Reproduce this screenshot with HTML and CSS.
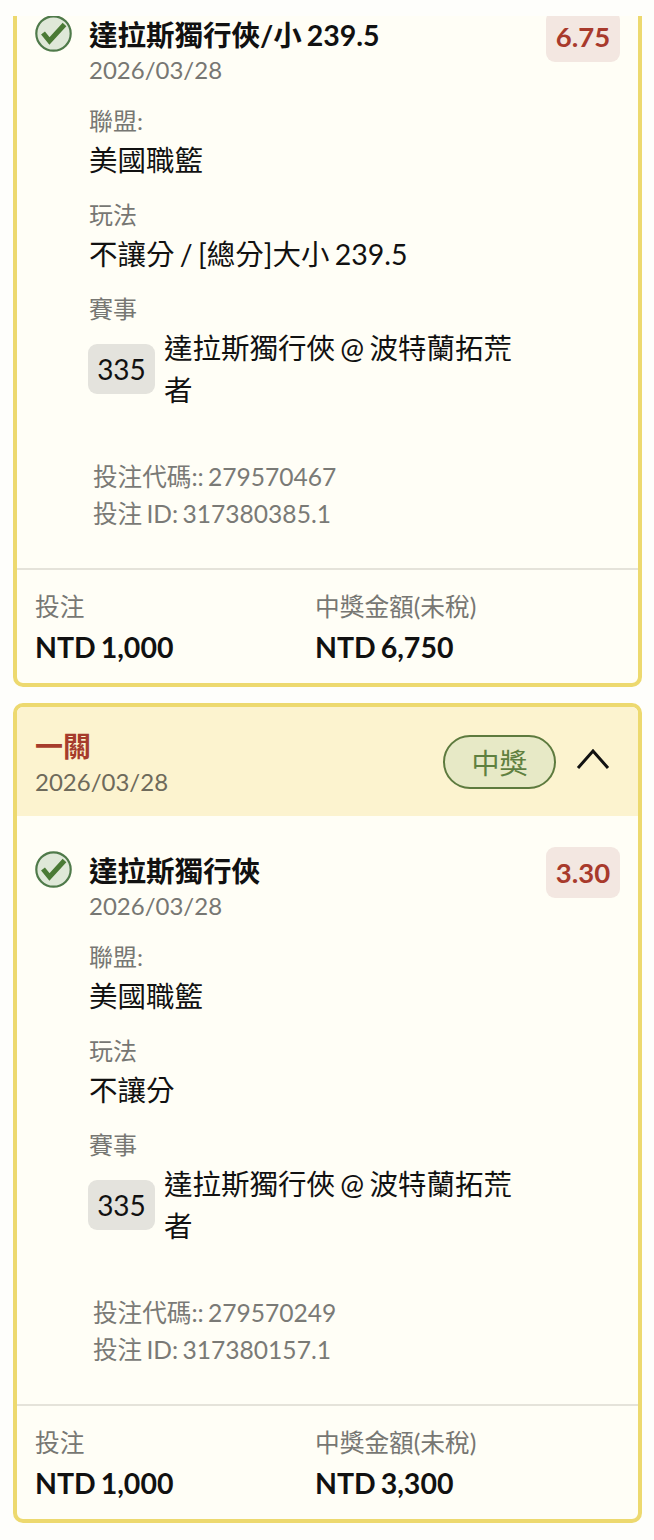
FILE: index.html
```html
<!DOCTYPE html>
<html lang="zh-Hant">
<head>
<meta charset="utf-8">
<title>投注紀錄</title>
<link rel="stylesheet" href="styles.css">
</head>
<body>
<main class="page">
  <div class="clip">
    <article class="card card--cut">
      <section class="selection">
        <svg class="check" viewBox="0 0 37 37" aria-hidden="true"><circle cx="18.5" cy="18.5" r="17.2" fill="#dfe8d8" stroke="#4f7a4a" stroke-width="2.2"/><path d="M8 18l6.5 8L29.5 9.5" fill="none" stroke="#4a7a35" stroke-width="5"/></svg>
        <div class="selection-main">
          <h2 class="pick">達拉斯獨行俠/小 239.5</h2>
          <p class="pick-date">2026/03/28</p>
          <p class="field-label field-label--first">聯盟:</p>
          <p class="field-value">美國職籃</p>
          <p class="field-label">玩法</p>
          <p class="field-value">不讓分 / [總分]大小 239.5</p>
          <p class="field-label">賽事</p>
          <div class="match"><span class="chip">335</span><span class="match-name">達拉斯獨行俠 @ 波特蘭拓荒者</span></div>
        </div>
        <span class="odds">6.75</span>
      </section>
      <section class="meta">
        <p>投注代碼:: 279570467</p>
        <p>投注 ID: 317380385.1</p>
      </section>
      <footer class="totals">
        <div><p class="total-label">投注</p><p class="total-value">NTD 1,000</p></div>
        <div><p class="total-label">中獎金額(未稅)</p><p class="total-value">NTD 6,750</p></div>
      </footer>
    </article>
  </div>

  <article class="card">
    <header class="card-head">
      <div>
        <h2 class="bet-type">一關</h2>
        <p class="bet-date">2026/03/28</p>
      </div>
      <div class="head-right">
        <span class="status">中獎</span>
        <svg class="chevron" viewBox="0 0 34 22" aria-hidden="true"><path d="M2 20L17 3l15 17" fill="none" stroke="#111" stroke-width="3"/></svg>
      </div>
    </header>
    <section class="selection">
      <svg class="check" viewBox="0 0 37 37" aria-hidden="true"><circle cx="18.5" cy="18.5" r="17.2" fill="#dfe8d8" stroke="#4f7a4a" stroke-width="2.2"/><path d="M8 18l6.5 8L29.5 9.5" fill="none" stroke="#4a7a35" stroke-width="5"/></svg>
      <div class="selection-main">
        <h2 class="pick">達拉斯獨行俠</h2>
        <p class="pick-date">2026/03/28</p>
        <p class="field-label field-label--first">聯盟:</p>
        <p class="field-value">美國職籃</p>
        <p class="field-label">玩法</p>
        <p class="field-value">不讓分</p>
        <p class="field-label">賽事</p>
        <div class="match"><span class="chip">335</span><span class="match-name">達拉斯獨行俠 @ 波特蘭拓荒者</span></div>
      </div>
      <span class="odds">3.30</span>
    </section>
    <section class="meta">
      <p>投注代碼:: 279570249</p>
      <p>投注 ID: 317380157.1</p>
    </section>
    <footer class="totals">
      <div><p class="total-label">投注</p><p class="total-value">NTD 1,000</p></div>
      <div><p class="total-label">中獎金額(未稅)</p><p class="total-value">NTD 3,300</p></div>
    </footer>
  </article>
</main>
</body>
</html>
```

FILE: styles.css
```css
* { box-sizing: border-box; }
html, body { margin: 0; padding: 0; }
body {
  background: #fefefb;
  font-family: "Lato", "Noto Sans CJK TC", sans-serif;
  color: #111;
  word-spacing: -2px;
}
h2, p { margin: 0; font-weight: 400; }
.page {
  display: flex;
  flex-direction: column;
  gap: 16px;
  padding: 16px 12px 0 13px;
}
.clip { overflow: hidden; }
.card {
  border: 4px solid #edd96f;
  border-radius: 10px;
  background: #fffef6;
  overflow: hidden;
}
.card--cut { margin-top: -40px; }
.card-head {
  height: 109px;
  background: #fcf3cf;
  display: flex;
  justify-content: space-between;
  align-items: center;
  padding: 5px 28px 0 18px;
}
.bet-type {
  font-size: 28px;
  line-height: 34px;
  font-weight: 700;
  color: #a63c2c;
}
.bet-date {
  font-size: 24px;
  line-height: 34px;
  margin-top: 2px;
  color: #6e6a5b;
}
.head-right {
  display: flex;
  align-items: center;
  gap: 20px;
  margin-top: -5px;
}
.status {
  width: 113px;
  height: 54px;
  display: flex;
  align-items: center;
  justify-content: center;
  border: 2.5px solid #5d7a3e;
  border-radius: 27px;
  background: #e7e9c6;
  color: #5f8040;
  font-size: 28px;
}
.chevron { width: 34px; height: 22px; display: block; margin-bottom: 6px; }
.selection {
  display: flex;
  align-items: flex-start;
  padding: 31px 18px 0;
}
.check {
  width: 37px;
  height: 37px;
  flex: none;
  margin: 4px 17px 0 0;
}
.selection-main { flex: 1; min-width: 0; }
.pick {
  font-size: 28.5px;
  line-height: 46px;
  font-weight: 700;
  margin-top: 1px;
}
.pick-date {
  font-size: 24px;
  line-height: 26px;
  color: #777773;
  margin-top: -1px;
}
.field-label {
  font-size: 24px;
  line-height: 34px;
  color: #777773;
  margin-top: 18px;
}
.field-label--first { margin-top: 21px; }
.field-value {
  font-size: 28.5px;
  line-height: 40px;
  margin-top: 2px;
}
.match {
  display: flex;
  align-items: center;
  gap: 9px;
  margin-top: 1px;
}
.chip {
  flex: none;
  width: 67px;
  height: 50px;
  margin-left: -1px;
  display: flex;
  align-items: center;
  justify-content: center;
  background: #e4e3dd;
  border-radius: 9px;
  font-size: 28px;
}
.match-name {
  width: 366px;
  font-size: 28.5px;
  line-height: 42px;
}
.odds {
  flex: none;
  width: 74px;
  height: 51px;
  margin-left: 6px;
  display: flex;
  align-items: center;
  justify-content: center;
  background: #f3e7e1;
  border-radius: 9px;
  color: #a83a2c;
  font-size: 27.5px;
  font-weight: 700;
}
.meta {
  padding: 47px 18px 36px 76px;
  font-size: 24.6px;
  line-height: 37px;
  color: #7a7a76;
}
.totals {
  display: grid;
  grid-template-columns: 280px 1fr;
  padding: 17px 18px 16px;
  border-top: 2px solid #e5e3da;
}
.total-label {
  font-size: 24.7px;
  line-height: 40px;
  color: #777773;
}
.total-value {
  font-size: 28.5px;
  line-height: 40px;
  font-weight: 700;
}
```
